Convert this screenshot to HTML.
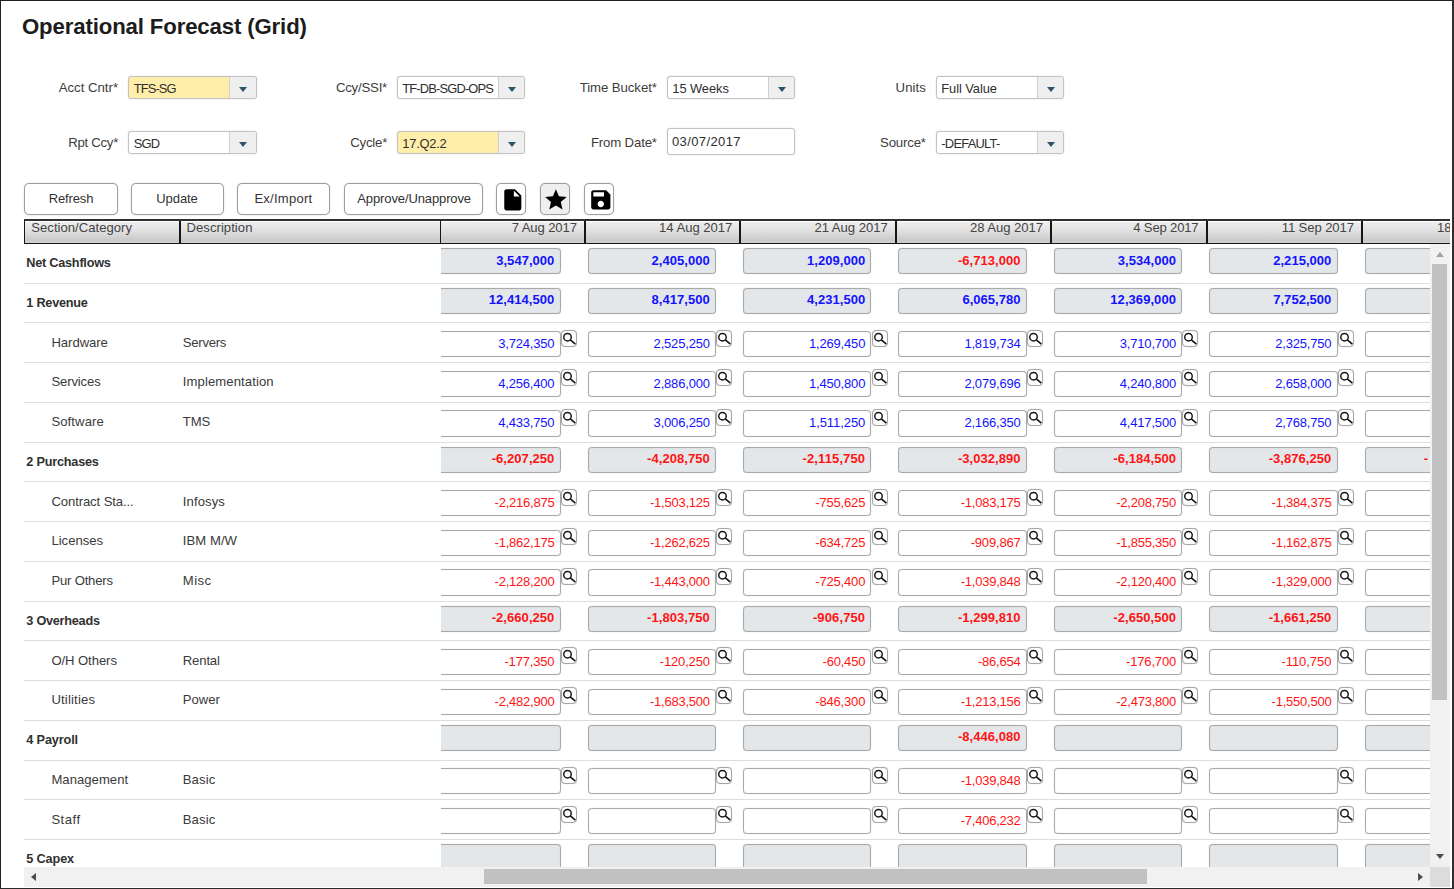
<!DOCTYPE html>
<html><head><meta charset="utf-8"><title>Operational Forecast (Grid)</title>
<style>
*{box-sizing:border-box;margin:0;padding:0}
html,body{width:1454px;height:889px;overflow:hidden;background:#fff}
body{font-family:"Liberation Sans",sans-serif;color:#333;position:relative;font-size:13px}
.a{position:absolute;white-space:nowrap}
#frame{position:absolute;left:0;top:0;width:1454px;height:889px;border-top:1px solid #222;border-left:1px solid #222;border-right:2px solid #2e2e2e;border-bottom:1px solid #2a2a2a;z-index:50;pointer-events:none}
.x{position:absolute;white-space:nowrap;line-height:20px;height:20px}
.lbl{color:#3c3c3c}
.sel{height:22.4px;width:128.2px;border:1px solid #c2c2c2;border-radius:3px;background:#fff;overflow:hidden;box-shadow:0 0 1.5px rgba(0,0,0,.18)}
.sel.y{background:#ffeeaa}
.sel .b{position:absolute;right:0;top:0;bottom:0;width:26.6px;background:#efefef;border-left:1px solid #cfcfcf}
.sel .b i{position:absolute;left:9.2px;top:10.1px;width:0;height:0;border-left:4.9px solid transparent;border-right:4.9px solid transparent;border-top:5.3px solid #2c5469}
.inp{border:1px solid #c2c2c2;border-radius:3px;background:#fff;box-shadow:0 0 1.5px rgba(0,0,0,.18)}
.btn{height:31.5px;border:1px solid #9e9e9e;border-radius:5px;background:#fff;box-shadow:0 0 1.2px rgba(0,0,0,.28)}
.btn.g{background:#efefef}
.btn svg{position:absolute}
#hdr{left:24px;top:219px;width:1425.8px;height:25px;background:linear-gradient(#fff 0,#fff 1px,#eeeeee 1px,#e2e2e2 9px,#c8c8c8 20.4px,#d0d0d0 20.6px,#d0d0d0 21.5px,#666 21.6px,#666 22px);border:1px solid #161616;border-top:2px solid #303030;border-right:0;overflow:hidden}
.hs{top:0;height:24px;width:2px;background:#161616}
#grid{left:24px;top:243.6px;width:1406px;height:623.6px;overflow:hidden}
.rl{left:0;width:1406px;height:1px;background:#dedede}
#sc{left:417px;top:0;width:989px;height:623.6px;overflow:hidden}
.ci{width:128.4px;height:26.2px;border:1px solid #a9a9a9;border-radius:3.5px;background:#fff;box-shadow:0 0 1px rgba(0,0,0,.2), inset 0 0 1px rgba(0,0,0,.18)}
.ci.t{background:#e4e7ea}
.p{color:#1212ff}.n{color:#ff1414}
.mg{width:16px;height:17px;border:1px solid #a6a6a6;border-radius:4px;background:#fff;overflow:hidden;box-shadow:0 0 1px rgba(0,0,0,.2), inset 0 0 1px rgba(0,0,0,.15)}
.mg svg{position:absolute;left:0;top:0;width:14px;height:14px}
#vsb{left:1430.2px;top:244.3px;width:19.4px;height:623px;background:#f1f1f1}
#hsb{left:24px;top:867px;width:1406.2px;height:20px;background:#f1f1f1}
#corner{left:1430.2px;top:867px;width:19.4px;height:20px;background:#dcdcdc}
.th{background:#c1c1c1}
</style></head>
<body>
<div id="frame"></div>
<div class="x " style="top:17.01px;font-size:22.2px;letter-spacing:-0.136px;font-weight:bold;color:#1c1c1c;left:22.00px;">Operational Forecast (Grid)</div>
<div class="x lbl" style="top:77.83px;font-size:13.2px;letter-spacing:-0.001px;left:58.70px;">Acct Cntr*</div>
<div class="a sel y" style="left:128.4px;top:76.3px">
<div class="x " style="top:2.03px;font-size:12.9px;letter-spacing:-0.867px;color:#2e2e2e;left:4.30px;">TFS-SG</div>
<span class="b"><i></i></span></div>
<div class="x lbl" style="top:132.83px;font-size:13.2px;letter-spacing:-0.272px;left:68.20px;">Rpt Ccy*</div>
<div class="a sel" style="left:128.4px;top:131.3px">
<div class="x " style="top:2.03px;font-size:12.9px;letter-spacing:-0.752px;color:#2e2e2e;left:4.30px;">SGD</div>
<span class="b"><i></i></span></div>
<div class="x lbl" style="top:77.83px;font-size:13.2px;letter-spacing:-0.202px;left:335.90px;">Ccy/SSI*</div>
<div class="a sel" style="left:397.0px;top:76.3px">
<div class="x " style="top:2.03px;font-size:12.9px;letter-spacing:-0.844px;color:#2e2e2e;left:4.30px;">TF-DB-SGD-OPS</div>
<span class="b"><i></i></span></div>
<div class="x lbl" style="top:132.83px;font-size:13.2px;letter-spacing:-0.224px;left:350.30px;">Cycle*</div>
<div class="a sel y" style="left:397.0px;top:131.3px">
<div class="x " style="top:2.03px;font-size:12.9px;letter-spacing:-0.229px;color:#2e2e2e;left:4.30px;">17.Q2.2</div>
<span class="b"><i></i></span></div>
<div class="x lbl" style="top:77.83px;font-size:13.2px;letter-spacing:-0.067px;left:579.70px;">Time Bucket*</div>
<div class="a sel" style="left:667.0px;top:76.3px">
<div class="x " style="top:2.03px;font-size:12.9px;letter-spacing:-0.078px;color:#2e2e2e;left:4.30px;">15 Weeks</div>
<span class="b"><i></i></span></div>
<div class="x lbl" style="top:132.83px;font-size:13.2px;letter-spacing:-0.148px;left:590.90px;">From Date*</div>
<div class="a inp" style="left:667px;top:128.4px;width:128px;height:26.4px">
<div class="x " style="top:2.50px;font-size:13.0px;letter-spacing:0.404px;color:#2e2e2e;left:3.90px;">03/07/2017</div>
</div>
<div class="x lbl" style="top:77.83px;font-size:13.2px;letter-spacing:0.045px;left:895.60px;">Units</div>
<div class="a sel" style="left:936.0px;top:76.3px">
<div class="x " style="top:2.03px;font-size:12.9px;letter-spacing:-0.071px;color:#2e2e2e;left:4.30px;">Full Value</div>
<span class="b"><i></i></span></div>
<div class="x lbl" style="top:132.83px;font-size:13.2px;letter-spacing:-0.152px;left:880.00px;">Source*</div>
<div class="a sel" style="left:936.0px;top:131.3px">
<div class="x " style="top:2.03px;font-size:12.9px;letter-spacing:-0.754px;color:#2e2e2e;left:4.30px;">-DEFAULT-</div>
<span class="b"><i></i></span></div>
<div class="a btn" style="left:24.1px;top:183px;width:93.6px">
<div class="x " style="top:5.10px;font-size:13.0px;letter-spacing:-0.146px;left:23.70px;">Refresh</div>
</div>
<div class="a btn" style="left:130.7px;top:183px;width:93.2px">
<div class="x " style="top:5.10px;font-size:13.0px;letter-spacing:-0.053px;left:24.50px;">Update</div>
</div>
<div class="a btn" style="left:237px;top:183px;width:93.2px">
<div class="x " style="top:5.10px;font-size:13.0px;letter-spacing:0.264px;left:16.40px;">Ex/Import</div>
</div>
<div class="a btn" style="left:343.6px;top:183px;width:139.2px">
<div class="x " style="top:5.10px;font-size:13.0px;letter-spacing:-0.114px;left:12.70px;">Approve/Unapprove</div>
</div>
<div class="a btn" style="left:496.3px;top:183px;width:30.2px">
<svg style="left:2.6px;top:2.8px;width:25.6px;height:25.6px" viewBox="0 0 24 24"><path fill="#000" d="M6 2c-1.1 0-1.99.9-1.99 2L4 20c0 1.1.89 2 1.99 2H18c1.1 0 2-.9 2-2V8l-6-6H6zm7 7V3.5L18.5 9H13z"/></svg>
</div>
<div class="a btn g" style="left:539.6px;top:183px;width:30.8px">
<svg style="left:2.5px;top:2.8px;width:25.8px;height:25.8px" viewBox="0 0 24 24"><path fill="#000" d="M12 17.27L18.18 21l-1.64-7.03L22 9.24l-7.19-.61L12 2 9.19 8.63 2 9.24l5.46 4.73L5.82 21z"/></svg>
</div>
<div class="a btn" style="left:583.9px;top:183px;width:30.0px">
<svg style="left:2.8px;top:2.9px;width:25.6px;height:25.6px" viewBox="0 0 24 24"><path fill="#000" d="M17 3H5c-1.11 0-2 .9-2 2v14c0 1.1.89 2 2 2h14c1.1 0 2-.9 2-2V7l-4-4zm-5 16c-1.66 0-3-1.34-3-3s1.34-3 3-3 3 1.34 3 3-1.34 3-3 3zm3-10H5V5h10v4z"/></svg>
</div>
<div id="hdr" class="a">
<div class="x " style="top:-2.84px;font-size:13.1px;letter-spacing:0.013px;color:#444;left:6.30px;">Section/Category</div>
<div class="a hs" style="left:153.8px"></div>
<div class="x " style="top:-2.84px;font-size:13.1px;letter-spacing:0.043px;color:#444;left:161.50px;">Description</div>
<div class="a hs" style="left:415px;width:1.4px"></div>
<div class="x " style="top:-2.84px;font-size:13.1px;letter-spacing:-0.110px;color:#444;left:486.70px;">7 Aug 2017</div>
<div class="a hs" style="left:559.0px"></div>
<div class="x " style="top:-2.84px;font-size:13.1px;letter-spacing:-0.035px;color:#444;left:634.10px;">14 Aug 2017</div>
<div class="a hs" style="left:714.4px"></div>
<div class="x " style="top:-2.84px;font-size:13.1px;letter-spacing:-0.035px;color:#444;left:789.50px;">21 Aug 2017</div>
<div class="a hs" style="left:869.8px"></div>
<div class="x " style="top:-2.84px;font-size:13.1px;letter-spacing:-0.035px;color:#444;left:944.90px;">28 Aug 2017</div>
<div class="a hs" style="left:1025.2px"></div>
<div class="x " style="top:-2.84px;font-size:13.1px;letter-spacing:-0.182px;color:#444;left:1108.30px;">4 Sep 2017</div>
<div class="a hs" style="left:1180.6px"></div>
<div class="x " style="top:-2.84px;font-size:13.1px;letter-spacing:-0.103px;color:#444;left:1256.70px;">11 Sep 2017</div>
<div class="a hs" style="left:1336.0px"></div>
<div class="x " style="top:-2.84px;font-size:13.1px;letter-spacing:-0.191px;color:#444;left:1412.10px;">18 Sep 2017</div>
<div class="a hs" style="left:1491.4px"></div>
</div>
<div id="grid" class="a">
<div class="x " style="top:9.60px;font-size:12.7px;letter-spacing:-0.239px;font-weight:bold;color:#303030;left:2.30px;">Net Cashflows</div>
<div class="a rl" style="top:39.1px"></div>
<div class="x " style="top:49.34px;font-size:12.7px;letter-spacing:-0.237px;font-weight:bold;color:#303030;left:2.30px;">1 Revenue</div>
<div class="a rl" style="top:78.9px"></div>
<div class="x " style="top:89.05px;font-size:13.1px;letter-spacing:-0.036px;color:#3a3a3a;left:27.40px;">Hardware</div>
<div class="x " style="top:89.05px;font-size:13.1px;letter-spacing:-0.248px;color:#3a3a3a;left:158.80px;">Servers</div>
<div class="a rl" style="top:118.6px"></div>
<div class="x " style="top:128.80px;font-size:13.1px;letter-spacing:-0.129px;color:#3a3a3a;left:27.40px;">Services</div>
<div class="x " style="top:128.80px;font-size:13.1px;letter-spacing:0.102px;color:#3a3a3a;left:158.80px;">Implementation</div>
<div class="a rl" style="top:158.4px"></div>
<div class="x " style="top:168.54px;font-size:13.1px;letter-spacing:0.100px;color:#3a3a3a;left:27.40px;">Software</div>
<div class="x " style="top:168.54px;font-size:13.1px;letter-spacing:-0.151px;color:#3a3a3a;left:158.80px;">TMS</div>
<div class="a rl" style="top:198.1px"></div>
<div class="x " style="top:208.32px;font-size:12.7px;letter-spacing:-0.213px;font-weight:bold;color:#303030;left:2.30px;">2 Purchases</div>
<div class="a rl" style="top:237.9px"></div>
<div class="x " style="top:248.03px;font-size:13.1px;letter-spacing:-0.095px;color:#3a3a3a;left:27.40px;">Contract Sta...</div>
<div class="x " style="top:248.03px;font-size:13.1px;letter-spacing:0.100px;color:#3a3a3a;left:158.80px;">Infosys</div>
<div class="a rl" style="top:277.6px"></div>
<div class="x " style="top:287.78px;font-size:13.1px;letter-spacing:0.012px;color:#3a3a3a;left:27.40px;">Licenses</div>
<div class="x " style="top:287.78px;font-size:13.1px;letter-spacing:0.051px;color:#3a3a3a;left:158.80px;">IBM M/W</div>
<div class="a rl" style="top:317.4px"></div>
<div class="x " style="top:327.52px;font-size:13.1px;letter-spacing:-0.184px;color:#3a3a3a;left:27.40px;">Pur Others</div>
<div class="x " style="top:327.52px;font-size:13.1px;letter-spacing:0.444px;color:#3a3a3a;left:158.80px;">Misc</div>
<div class="a rl" style="top:357.1px"></div>
<div class="x " style="top:367.30px;font-size:12.7px;letter-spacing:-0.250px;font-weight:bold;color:#303030;left:2.30px;">3 Overheads</div>
<div class="a rl" style="top:396.8px"></div>
<div class="x " style="top:407.01px;font-size:13.1px;letter-spacing:-0.074px;color:#3a3a3a;left:27.40px;">O/H Others</div>
<div class="x " style="top:407.01px;font-size:13.1px;letter-spacing:-0.145px;color:#3a3a3a;left:158.80px;">Rental</div>
<div class="a rl" style="top:436.6px"></div>
<div class="x " style="top:446.76px;font-size:13.1px;letter-spacing:0.176px;color:#3a3a3a;left:27.40px;">Utilities</div>
<div class="x " style="top:446.76px;font-size:13.1px;letter-spacing:-0.027px;color:#3a3a3a;left:158.80px;">Power</div>
<div class="a rl" style="top:476.3px"></div>
<div class="x " style="top:486.54px;font-size:12.7px;letter-spacing:-0.138px;font-weight:bold;color:#303030;left:2.30px;">4 Payroll</div>
<div class="a rl" style="top:516.1px"></div>
<div class="x " style="top:526.25px;font-size:13.1px;letter-spacing:0.033px;color:#3a3a3a;left:27.40px;">Management</div>
<div class="x " style="top:526.25px;font-size:13.1px;letter-spacing:0.093px;color:#3a3a3a;left:158.80px;">Basic</div>
<div class="a rl" style="top:555.8px"></div>
<div class="x " style="top:565.99px;font-size:13.1px;letter-spacing:0.499px;color:#3a3a3a;left:27.40px;">Staff</div>
<div class="x " style="top:565.99px;font-size:13.1px;letter-spacing:0.093px;color:#3a3a3a;left:158.80px;">Basic</div>
<div class="a rl" style="top:595.6px"></div>
<div class="x " style="top:605.77px;font-size:12.7px;letter-spacing:-0.144px;font-weight:bold;color:#303030;left:2.30px;">5 Capex</div>
<div class="a rl" style="top:635.3px"></div>
<div id="sc" class="a">
<div class="a ci t p" style="left:-8.8px;top:4.3px">
<div class="x " style="top:1.70px;font-size:13.0px;letter-spacing:0.039px;font-weight:bold;left:63.01px;">3,547,000</div>
</div>
<div class="a ci t p" style="left:146.6px;top:4.3px">
<div class="x " style="top:1.70px;font-size:13.0px;letter-spacing:0.039px;font-weight:bold;left:63.01px;">2,405,000</div>
</div>
<div class="a ci t p" style="left:302.0px;top:4.3px">
<div class="x " style="top:1.70px;font-size:13.0px;letter-spacing:0.039px;font-weight:bold;left:63.01px;">1,209,000</div>
</div>
<div class="a ci t n" style="left:457.4px;top:4.3px">
<div class="x " style="top:1.70px;font-size:13.0px;letter-spacing:0.053px;font-weight:bold;left:58.51px;">-6,713,000</div>
</div>
<div class="a ci t p" style="left:612.8px;top:4.3px">
<div class="x " style="top:1.70px;font-size:13.0px;letter-spacing:0.039px;font-weight:bold;left:63.01px;">3,534,000</div>
</div>
<div class="a ci t p" style="left:768.2px;top:4.3px">
<div class="x " style="top:1.70px;font-size:13.0px;letter-spacing:0.039px;font-weight:bold;left:63.01px;">2,215,000</div>
</div>
<div class="a ci t p" style="left:923.6px;top:4.3px">
</div>
<div class="a ci t p" style="left:-8.8px;top:44.0px">
<div class="x " style="top:1.70px;font-size:13.0px;letter-spacing:0.059px;font-weight:bold;left:55.54px;">12,414,500</div>
</div>
<div class="a ci t p" style="left:146.6px;top:44.0px">
<div class="x " style="top:1.70px;font-size:13.0px;letter-spacing:0.039px;font-weight:bold;left:63.01px;">8,417,500</div>
</div>
<div class="a ci t p" style="left:302.0px;top:44.0px">
<div class="x " style="top:1.70px;font-size:13.0px;letter-spacing:0.039px;font-weight:bold;left:63.01px;">4,231,500</div>
</div>
<div class="a ci t p" style="left:457.4px;top:44.0px">
<div class="x " style="top:1.70px;font-size:13.0px;letter-spacing:0.039px;font-weight:bold;left:63.01px;">6,065,780</div>
</div>
<div class="a ci t p" style="left:612.8px;top:44.0px">
<div class="x " style="top:1.70px;font-size:13.0px;letter-spacing:0.059px;font-weight:bold;left:55.54px;">12,369,000</div>
</div>
<div class="a ci t p" style="left:768.2px;top:44.0px">
<div class="x " style="top:1.70px;font-size:13.0px;letter-spacing:0.039px;font-weight:bold;left:63.01px;">7,752,500</div>
</div>
<div class="a ci t p" style="left:923.6px;top:44.0px">
</div>
<div class="a ci e p" style="left:-8.8px;top:87.3px">
<div class="x " style="top:2.00px;font-size:13.0px;letter-spacing:-0.182px;left:65.00px;">3,724,350</div>
</div>
<div class="a mg" style="left:119.8px;top:86.0px"><svg viewBox="0 0 14 14"><circle cx="5.5" cy="6.2" r="3.75" fill="none" stroke="#151515" stroke-width="1.45"/><path d="M8.3 8.9L13.4 13.2" stroke="#151515" stroke-width="1.6" stroke-linecap="butt"/></svg></div>
<div class="a ci e p" style="left:146.6px;top:87.3px">
<div class="x " style="top:2.00px;font-size:13.0px;letter-spacing:-0.182px;left:65.00px;">2,525,250</div>
</div>
<div class="a mg" style="left:275.2px;top:86.0px"><svg viewBox="0 0 14 14"><circle cx="5.5" cy="6.2" r="3.75" fill="none" stroke="#151515" stroke-width="1.45"/><path d="M8.3 8.9L13.4 13.2" stroke="#151515" stroke-width="1.6" stroke-linecap="butt"/></svg></div>
<div class="a ci e p" style="left:302.0px;top:87.3px">
<div class="x " style="top:2.00px;font-size:13.0px;letter-spacing:-0.182px;left:65.00px;">1,269,450</div>
</div>
<div class="a mg" style="left:430.6px;top:86.0px"><svg viewBox="0 0 14 14"><circle cx="5.5" cy="6.2" r="3.75" fill="none" stroke="#151515" stroke-width="1.45"/><path d="M8.3 8.9L13.4 13.2" stroke="#151515" stroke-width="1.6" stroke-linecap="butt"/></svg></div>
<div class="a ci e p" style="left:457.4px;top:87.3px">
<div class="x " style="top:2.00px;font-size:13.0px;letter-spacing:-0.182px;left:65.00px;">1,819,734</div>
</div>
<div class="a mg" style="left:586.0px;top:86.0px"><svg viewBox="0 0 14 14"><circle cx="5.5" cy="6.2" r="3.75" fill="none" stroke="#151515" stroke-width="1.45"/><path d="M8.3 8.9L13.4 13.2" stroke="#151515" stroke-width="1.6" stroke-linecap="butt"/></svg></div>
<div class="a ci e p" style="left:612.8px;top:87.3px">
<div class="x " style="top:2.00px;font-size:13.0px;letter-spacing:-0.182px;left:65.00px;">3,710,700</div>
</div>
<div class="a mg" style="left:741.4px;top:86.0px"><svg viewBox="0 0 14 14"><circle cx="5.5" cy="6.2" r="3.75" fill="none" stroke="#151515" stroke-width="1.45"/><path d="M8.3 8.9L13.4 13.2" stroke="#151515" stroke-width="1.6" stroke-linecap="butt"/></svg></div>
<div class="a ci e p" style="left:768.2px;top:87.3px">
<div class="x " style="top:2.00px;font-size:13.0px;letter-spacing:-0.182px;left:65.00px;">2,325,750</div>
</div>
<div class="a mg" style="left:896.8px;top:86.0px"><svg viewBox="0 0 14 14"><circle cx="5.5" cy="6.2" r="3.75" fill="none" stroke="#151515" stroke-width="1.45"/><path d="M8.3 8.9L13.4 13.2" stroke="#151515" stroke-width="1.6" stroke-linecap="butt"/></svg></div>
<div class="a ci e p" style="left:923.6px;top:87.3px">
</div>
<div class="a mg" style="left:1052.2px;top:86.0px"><svg viewBox="0 0 14 14"><circle cx="5.5" cy="6.2" r="3.75" fill="none" stroke="#151515" stroke-width="1.45"/><path d="M8.3 8.9L13.4 13.2" stroke="#151515" stroke-width="1.6" stroke-linecap="butt"/></svg></div>
<div class="a ci e p" style="left:-8.8px;top:127.0px">
<div class="x " style="top:2.00px;font-size:13.0px;letter-spacing:-0.182px;left:65.00px;">4,256,400</div>
</div>
<div class="a mg" style="left:119.8px;top:125.7px"><svg viewBox="0 0 14 14"><circle cx="5.5" cy="6.2" r="3.75" fill="none" stroke="#151515" stroke-width="1.45"/><path d="M8.3 8.9L13.4 13.2" stroke="#151515" stroke-width="1.6" stroke-linecap="butt"/></svg></div>
<div class="a ci e p" style="left:146.6px;top:127.0px">
<div class="x " style="top:2.00px;font-size:13.0px;letter-spacing:-0.182px;left:65.00px;">2,886,000</div>
</div>
<div class="a mg" style="left:275.2px;top:125.7px"><svg viewBox="0 0 14 14"><circle cx="5.5" cy="6.2" r="3.75" fill="none" stroke="#151515" stroke-width="1.45"/><path d="M8.3 8.9L13.4 13.2" stroke="#151515" stroke-width="1.6" stroke-linecap="butt"/></svg></div>
<div class="a ci e p" style="left:302.0px;top:127.0px">
<div class="x " style="top:2.00px;font-size:13.0px;letter-spacing:-0.182px;left:65.00px;">1,450,800</div>
</div>
<div class="a mg" style="left:430.6px;top:125.7px"><svg viewBox="0 0 14 14"><circle cx="5.5" cy="6.2" r="3.75" fill="none" stroke="#151515" stroke-width="1.45"/><path d="M8.3 8.9L13.4 13.2" stroke="#151515" stroke-width="1.6" stroke-linecap="butt"/></svg></div>
<div class="a ci e p" style="left:457.4px;top:127.0px">
<div class="x " style="top:2.00px;font-size:13.0px;letter-spacing:-0.182px;left:65.00px;">2,079,696</div>
</div>
<div class="a mg" style="left:586.0px;top:125.7px"><svg viewBox="0 0 14 14"><circle cx="5.5" cy="6.2" r="3.75" fill="none" stroke="#151515" stroke-width="1.45"/><path d="M8.3 8.9L13.4 13.2" stroke="#151515" stroke-width="1.6" stroke-linecap="butt"/></svg></div>
<div class="a ci e p" style="left:612.8px;top:127.0px">
<div class="x " style="top:2.00px;font-size:13.0px;letter-spacing:-0.182px;left:65.00px;">4,240,800</div>
</div>
<div class="a mg" style="left:741.4px;top:125.7px"><svg viewBox="0 0 14 14"><circle cx="5.5" cy="6.2" r="3.75" fill="none" stroke="#151515" stroke-width="1.45"/><path d="M8.3 8.9L13.4 13.2" stroke="#151515" stroke-width="1.6" stroke-linecap="butt"/></svg></div>
<div class="a ci e p" style="left:768.2px;top:127.0px">
<div class="x " style="top:2.00px;font-size:13.0px;letter-spacing:-0.182px;left:65.00px;">2,658,000</div>
</div>
<div class="a mg" style="left:896.8px;top:125.7px"><svg viewBox="0 0 14 14"><circle cx="5.5" cy="6.2" r="3.75" fill="none" stroke="#151515" stroke-width="1.45"/><path d="M8.3 8.9L13.4 13.2" stroke="#151515" stroke-width="1.6" stroke-linecap="butt"/></svg></div>
<div class="a ci e p" style="left:923.6px;top:127.0px">
</div>
<div class="a mg" style="left:1052.2px;top:125.7px"><svg viewBox="0 0 14 14"><circle cx="5.5" cy="6.2" r="3.75" fill="none" stroke="#151515" stroke-width="1.45"/><path d="M8.3 8.9L13.4 13.2" stroke="#151515" stroke-width="1.6" stroke-linecap="butt"/></svg></div>
<div class="a ci e p" style="left:-8.8px;top:166.8px">
<div class="x " style="top:2.00px;font-size:13.0px;letter-spacing:-0.182px;left:65.00px;">4,433,750</div>
</div>
<div class="a mg" style="left:119.8px;top:165.5px"><svg viewBox="0 0 14 14"><circle cx="5.5" cy="6.2" r="3.75" fill="none" stroke="#151515" stroke-width="1.45"/><path d="M8.3 8.9L13.4 13.2" stroke="#151515" stroke-width="1.6" stroke-linecap="butt"/></svg></div>
<div class="a ci e p" style="left:146.6px;top:166.8px">
<div class="x " style="top:2.00px;font-size:13.0px;letter-spacing:-0.182px;left:65.00px;">3,006,250</div>
</div>
<div class="a mg" style="left:275.2px;top:165.5px"><svg viewBox="0 0 14 14"><circle cx="5.5" cy="6.2" r="3.75" fill="none" stroke="#151515" stroke-width="1.45"/><path d="M8.3 8.9L13.4 13.2" stroke="#151515" stroke-width="1.6" stroke-linecap="butt"/></svg></div>
<div class="a ci e p" style="left:302.0px;top:166.8px">
<div class="x " style="top:2.00px;font-size:13.0px;letter-spacing:-0.074px;left:65.00px;">1,511,250</div>
</div>
<div class="a mg" style="left:430.6px;top:165.5px"><svg viewBox="0 0 14 14"><circle cx="5.5" cy="6.2" r="3.75" fill="none" stroke="#151515" stroke-width="1.45"/><path d="M8.3 8.9L13.4 13.2" stroke="#151515" stroke-width="1.6" stroke-linecap="butt"/></svg></div>
<div class="a ci e p" style="left:457.4px;top:166.8px">
<div class="x " style="top:2.00px;font-size:13.0px;letter-spacing:-0.182px;left:65.00px;">2,166,350</div>
</div>
<div class="a mg" style="left:586.0px;top:165.5px"><svg viewBox="0 0 14 14"><circle cx="5.5" cy="6.2" r="3.75" fill="none" stroke="#151515" stroke-width="1.45"/><path d="M8.3 8.9L13.4 13.2" stroke="#151515" stroke-width="1.6" stroke-linecap="butt"/></svg></div>
<div class="a ci e p" style="left:612.8px;top:166.8px">
<div class="x " style="top:2.00px;font-size:13.0px;letter-spacing:-0.182px;left:65.00px;">4,417,500</div>
</div>
<div class="a mg" style="left:741.4px;top:165.5px"><svg viewBox="0 0 14 14"><circle cx="5.5" cy="6.2" r="3.75" fill="none" stroke="#151515" stroke-width="1.45"/><path d="M8.3 8.9L13.4 13.2" stroke="#151515" stroke-width="1.6" stroke-linecap="butt"/></svg></div>
<div class="a ci e p" style="left:768.2px;top:166.8px">
<div class="x " style="top:2.00px;font-size:13.0px;letter-spacing:-0.182px;left:65.00px;">2,768,750</div>
</div>
<div class="a mg" style="left:896.8px;top:165.5px"><svg viewBox="0 0 14 14"><circle cx="5.5" cy="6.2" r="3.75" fill="none" stroke="#151515" stroke-width="1.45"/><path d="M8.3 8.9L13.4 13.2" stroke="#151515" stroke-width="1.6" stroke-linecap="butt"/></svg></div>
<div class="a ci e p" style="left:923.6px;top:166.8px">
</div>
<div class="a mg" style="left:1052.2px;top:165.5px"><svg viewBox="0 0 14 14"><circle cx="5.5" cy="6.2" r="3.75" fill="none" stroke="#151515" stroke-width="1.45"/><path d="M8.3 8.9L13.4 13.2" stroke="#151515" stroke-width="1.6" stroke-linecap="butt"/></svg></div>
<div class="a ci t n" style="left:-8.8px;top:203.0px">
<div class="x " style="top:1.70px;font-size:13.0px;letter-spacing:0.053px;font-weight:bold;left:58.51px;">-6,207,250</div>
</div>
<div class="a ci t n" style="left:146.6px;top:203.0px">
<div class="x " style="top:1.70px;font-size:13.0px;letter-spacing:0.053px;font-weight:bold;left:58.51px;">-4,208,750</div>
</div>
<div class="a ci t n" style="left:302.0px;top:203.0px">
<div class="x " style="top:1.70px;font-size:13.0px;letter-spacing:0.124px;font-weight:bold;left:58.51px;">-2,115,750</div>
</div>
<div class="a ci t n" style="left:457.4px;top:203.0px">
<div class="x " style="top:1.70px;font-size:13.0px;letter-spacing:0.053px;font-weight:bold;left:58.51px;">-3,032,890</div>
</div>
<div class="a ci t n" style="left:612.8px;top:203.0px">
<div class="x " style="top:1.70px;font-size:13.0px;letter-spacing:0.053px;font-weight:bold;left:58.51px;">-6,184,500</div>
</div>
<div class="a ci t n" style="left:768.2px;top:203.0px">
<div class="x " style="top:1.70px;font-size:13.0px;letter-spacing:0.053px;font-weight:bold;left:58.51px;">-3,876,250</div>
</div>
<div class="a ci t n" style="left:923.6px;top:203.0px">
<div class="x " style="top:1.70px;font-size:13.0px;letter-spacing:1.070px;font-weight:bold;left:58.10px;">-</div>
</div>
<div class="a ci e n" style="left:-8.8px;top:246.3px">
<div class="x " style="top:2.00px;font-size:13.0px;letter-spacing:-0.236px;left:61.40px;">-2,216,875</div>
</div>
<div class="a mg" style="left:119.8px;top:245.0px"><svg viewBox="0 0 14 14"><circle cx="5.5" cy="6.2" r="3.75" fill="none" stroke="#151515" stroke-width="1.45"/><path d="M8.3 8.9L13.4 13.2" stroke="#151515" stroke-width="1.6" stroke-linecap="butt"/></svg></div>
<div class="a ci e n" style="left:146.6px;top:246.3px">
<div class="x " style="top:2.00px;font-size:13.0px;letter-spacing:-0.236px;left:61.40px;">-1,503,125</div>
</div>
<div class="a mg" style="left:275.2px;top:245.0px"><svg viewBox="0 0 14 14"><circle cx="5.5" cy="6.2" r="3.75" fill="none" stroke="#151515" stroke-width="1.45"/><path d="M8.3 8.9L13.4 13.2" stroke="#151515" stroke-width="1.6" stroke-linecap="butt"/></svg></div>
<div class="a ci e n" style="left:302.0px;top:246.3px">
<div class="x " style="top:2.00px;font-size:13.0px;letter-spacing:-0.172px;left:71.25px;">-755,625</div>
</div>
<div class="a mg" style="left:430.6px;top:245.0px"><svg viewBox="0 0 14 14"><circle cx="5.5" cy="6.2" r="3.75" fill="none" stroke="#151515" stroke-width="1.45"/><path d="M8.3 8.9L13.4 13.2" stroke="#151515" stroke-width="1.6" stroke-linecap="butt"/></svg></div>
<div class="a ci e n" style="left:457.4px;top:246.3px">
<div class="x " style="top:2.00px;font-size:13.0px;letter-spacing:-0.236px;left:61.40px;">-1,083,175</div>
</div>
<div class="a mg" style="left:586.0px;top:245.0px"><svg viewBox="0 0 14 14"><circle cx="5.5" cy="6.2" r="3.75" fill="none" stroke="#151515" stroke-width="1.45"/><path d="M8.3 8.9L13.4 13.2" stroke="#151515" stroke-width="1.6" stroke-linecap="butt"/></svg></div>
<div class="a ci e n" style="left:612.8px;top:246.3px">
<div class="x " style="top:2.00px;font-size:13.0px;letter-spacing:-0.236px;left:61.40px;">-2,208,750</div>
</div>
<div class="a mg" style="left:741.4px;top:245.0px"><svg viewBox="0 0 14 14"><circle cx="5.5" cy="6.2" r="3.75" fill="none" stroke="#151515" stroke-width="1.45"/><path d="M8.3 8.9L13.4 13.2" stroke="#151515" stroke-width="1.6" stroke-linecap="butt"/></svg></div>
<div class="a ci e n" style="left:768.2px;top:246.3px">
<div class="x " style="top:2.00px;font-size:13.0px;letter-spacing:-0.236px;left:61.40px;">-1,384,375</div>
</div>
<div class="a mg" style="left:896.8px;top:245.0px"><svg viewBox="0 0 14 14"><circle cx="5.5" cy="6.2" r="3.75" fill="none" stroke="#151515" stroke-width="1.45"/><path d="M8.3 8.9L13.4 13.2" stroke="#151515" stroke-width="1.6" stroke-linecap="butt"/></svg></div>
<div class="a ci e p" style="left:923.6px;top:246.3px">
</div>
<div class="a mg" style="left:1052.2px;top:245.0px"><svg viewBox="0 0 14 14"><circle cx="5.5" cy="6.2" r="3.75" fill="none" stroke="#151515" stroke-width="1.45"/><path d="M8.3 8.9L13.4 13.2" stroke="#151515" stroke-width="1.6" stroke-linecap="butt"/></svg></div>
<div class="a ci e n" style="left:-8.8px;top:286.0px">
<div class="x " style="top:2.00px;font-size:13.0px;letter-spacing:-0.236px;left:61.40px;">-1,862,175</div>
</div>
<div class="a mg" style="left:119.8px;top:284.7px"><svg viewBox="0 0 14 14"><circle cx="5.5" cy="6.2" r="3.75" fill="none" stroke="#151515" stroke-width="1.45"/><path d="M8.3 8.9L13.4 13.2" stroke="#151515" stroke-width="1.6" stroke-linecap="butt"/></svg></div>
<div class="a ci e n" style="left:146.6px;top:286.0px">
<div class="x " style="top:2.00px;font-size:13.0px;letter-spacing:-0.236px;left:61.40px;">-1,262,625</div>
</div>
<div class="a mg" style="left:275.2px;top:284.7px"><svg viewBox="0 0 14 14"><circle cx="5.5" cy="6.2" r="3.75" fill="none" stroke="#151515" stroke-width="1.45"/><path d="M8.3 8.9L13.4 13.2" stroke="#151515" stroke-width="1.6" stroke-linecap="butt"/></svg></div>
<div class="a ci e n" style="left:302.0px;top:286.0px">
<div class="x " style="top:2.00px;font-size:13.0px;letter-spacing:-0.172px;left:71.25px;">-634,725</div>
</div>
<div class="a mg" style="left:430.6px;top:284.7px"><svg viewBox="0 0 14 14"><circle cx="5.5" cy="6.2" r="3.75" fill="none" stroke="#151515" stroke-width="1.45"/><path d="M8.3 8.9L13.4 13.2" stroke="#151515" stroke-width="1.6" stroke-linecap="butt"/></svg></div>
<div class="a ci e n" style="left:457.4px;top:286.0px">
<div class="x " style="top:2.00px;font-size:13.0px;letter-spacing:-0.172px;left:71.25px;">-909,867</div>
</div>
<div class="a mg" style="left:586.0px;top:284.7px"><svg viewBox="0 0 14 14"><circle cx="5.5" cy="6.2" r="3.75" fill="none" stroke="#151515" stroke-width="1.45"/><path d="M8.3 8.9L13.4 13.2" stroke="#151515" stroke-width="1.6" stroke-linecap="butt"/></svg></div>
<div class="a ci e n" style="left:612.8px;top:286.0px">
<div class="x " style="top:2.00px;font-size:13.0px;letter-spacing:-0.236px;left:61.40px;">-1,855,350</div>
</div>
<div class="a mg" style="left:741.4px;top:284.7px"><svg viewBox="0 0 14 14"><circle cx="5.5" cy="6.2" r="3.75" fill="none" stroke="#151515" stroke-width="1.45"/><path d="M8.3 8.9L13.4 13.2" stroke="#151515" stroke-width="1.6" stroke-linecap="butt"/></svg></div>
<div class="a ci e n" style="left:768.2px;top:286.0px">
<div class="x " style="top:2.00px;font-size:13.0px;letter-spacing:-0.236px;left:61.40px;">-1,162,875</div>
</div>
<div class="a mg" style="left:896.8px;top:284.7px"><svg viewBox="0 0 14 14"><circle cx="5.5" cy="6.2" r="3.75" fill="none" stroke="#151515" stroke-width="1.45"/><path d="M8.3 8.9L13.4 13.2" stroke="#151515" stroke-width="1.6" stroke-linecap="butt"/></svg></div>
<div class="a ci e p" style="left:923.6px;top:286.0px">
</div>
<div class="a mg" style="left:1052.2px;top:284.7px"><svg viewBox="0 0 14 14"><circle cx="5.5" cy="6.2" r="3.75" fill="none" stroke="#151515" stroke-width="1.45"/><path d="M8.3 8.9L13.4 13.2" stroke="#151515" stroke-width="1.6" stroke-linecap="butt"/></svg></div>
<div class="a ci e n" style="left:-8.8px;top:325.8px">
<div class="x " style="top:2.00px;font-size:13.0px;letter-spacing:-0.236px;left:61.40px;">-2,128,200</div>
</div>
<div class="a mg" style="left:119.8px;top:324.5px"><svg viewBox="0 0 14 14"><circle cx="5.5" cy="6.2" r="3.75" fill="none" stroke="#151515" stroke-width="1.45"/><path d="M8.3 8.9L13.4 13.2" stroke="#151515" stroke-width="1.6" stroke-linecap="butt"/></svg></div>
<div class="a ci e n" style="left:146.6px;top:325.8px">
<div class="x " style="top:2.00px;font-size:13.0px;letter-spacing:-0.236px;left:61.40px;">-1,443,000</div>
</div>
<div class="a mg" style="left:275.2px;top:324.5px"><svg viewBox="0 0 14 14"><circle cx="5.5" cy="6.2" r="3.75" fill="none" stroke="#151515" stroke-width="1.45"/><path d="M8.3 8.9L13.4 13.2" stroke="#151515" stroke-width="1.6" stroke-linecap="butt"/></svg></div>
<div class="a ci e n" style="left:302.0px;top:325.8px">
<div class="x " style="top:2.00px;font-size:13.0px;letter-spacing:-0.172px;left:71.25px;">-725,400</div>
</div>
<div class="a mg" style="left:430.6px;top:324.5px"><svg viewBox="0 0 14 14"><circle cx="5.5" cy="6.2" r="3.75" fill="none" stroke="#151515" stroke-width="1.45"/><path d="M8.3 8.9L13.4 13.2" stroke="#151515" stroke-width="1.6" stroke-linecap="butt"/></svg></div>
<div class="a ci e n" style="left:457.4px;top:325.8px">
<div class="x " style="top:2.00px;font-size:13.0px;letter-spacing:-0.236px;left:61.40px;">-1,039,848</div>
</div>
<div class="a mg" style="left:586.0px;top:324.5px"><svg viewBox="0 0 14 14"><circle cx="5.5" cy="6.2" r="3.75" fill="none" stroke="#151515" stroke-width="1.45"/><path d="M8.3 8.9L13.4 13.2" stroke="#151515" stroke-width="1.6" stroke-linecap="butt"/></svg></div>
<div class="a ci e n" style="left:612.8px;top:325.8px">
<div class="x " style="top:2.00px;font-size:13.0px;letter-spacing:-0.236px;left:61.40px;">-2,120,400</div>
</div>
<div class="a mg" style="left:741.4px;top:324.5px"><svg viewBox="0 0 14 14"><circle cx="5.5" cy="6.2" r="3.75" fill="none" stroke="#151515" stroke-width="1.45"/><path d="M8.3 8.9L13.4 13.2" stroke="#151515" stroke-width="1.6" stroke-linecap="butt"/></svg></div>
<div class="a ci e n" style="left:768.2px;top:325.8px">
<div class="x " style="top:2.00px;font-size:13.0px;letter-spacing:-0.236px;left:61.40px;">-1,329,000</div>
</div>
<div class="a mg" style="left:896.8px;top:324.5px"><svg viewBox="0 0 14 14"><circle cx="5.5" cy="6.2" r="3.75" fill="none" stroke="#151515" stroke-width="1.45"/><path d="M8.3 8.9L13.4 13.2" stroke="#151515" stroke-width="1.6" stroke-linecap="butt"/></svg></div>
<div class="a ci e p" style="left:923.6px;top:325.8px">
</div>
<div class="a mg" style="left:1052.2px;top:324.5px"><svg viewBox="0 0 14 14"><circle cx="5.5" cy="6.2" r="3.75" fill="none" stroke="#151515" stroke-width="1.45"/><path d="M8.3 8.9L13.4 13.2" stroke="#151515" stroke-width="1.6" stroke-linecap="butt"/></svg></div>
<div class="a ci t n" style="left:-8.8px;top:362.0px">
<div class="x " style="top:1.70px;font-size:13.0px;letter-spacing:0.053px;font-weight:bold;left:58.51px;">-2,660,250</div>
</div>
<div class="a ci t n" style="left:146.6px;top:362.0px">
<div class="x " style="top:1.70px;font-size:13.0px;letter-spacing:0.053px;font-weight:bold;left:58.51px;">-1,803,750</div>
</div>
<div class="a ci t n" style="left:302.0px;top:362.0px">
<div class="x " style="top:1.70px;font-size:13.0px;letter-spacing:0.118px;font-weight:bold;left:68.93px;">-906,750</div>
</div>
<div class="a ci t n" style="left:457.4px;top:362.0px">
<div class="x " style="top:1.70px;font-size:13.0px;letter-spacing:0.053px;font-weight:bold;left:58.51px;">-1,299,810</div>
</div>
<div class="a ci t n" style="left:612.8px;top:362.0px">
<div class="x " style="top:1.70px;font-size:13.0px;letter-spacing:0.053px;font-weight:bold;left:58.51px;">-2,650,500</div>
</div>
<div class="a ci t n" style="left:768.2px;top:362.0px">
<div class="x " style="top:1.70px;font-size:13.0px;letter-spacing:0.053px;font-weight:bold;left:58.51px;">-1,661,250</div>
</div>
<div class="a ci t p" style="left:923.6px;top:362.0px">
</div>
<div class="a ci e n" style="left:-8.8px;top:405.2px">
<div class="x " style="top:2.00px;font-size:13.0px;letter-spacing:-0.172px;left:71.25px;">-177,350</div>
</div>
<div class="a mg" style="left:119.8px;top:403.9px"><svg viewBox="0 0 14 14"><circle cx="5.5" cy="6.2" r="3.75" fill="none" stroke="#151515" stroke-width="1.45"/><path d="M8.3 8.9L13.4 13.2" stroke="#151515" stroke-width="1.6" stroke-linecap="butt"/></svg></div>
<div class="a ci e n" style="left:146.6px;top:405.2px">
<div class="x " style="top:2.00px;font-size:13.0px;letter-spacing:-0.172px;left:71.25px;">-120,250</div>
</div>
<div class="a mg" style="left:275.2px;top:403.9px"><svg viewBox="0 0 14 14"><circle cx="5.5" cy="6.2" r="3.75" fill="none" stroke="#151515" stroke-width="1.45"/><path d="M8.3 8.9L13.4 13.2" stroke="#151515" stroke-width="1.6" stroke-linecap="butt"/></svg></div>
<div class="a ci e n" style="left:302.0px;top:405.2px">
<div class="x " style="top:2.00px;font-size:13.0px;letter-spacing:-0.206px;left:78.55px;">-60,450</div>
</div>
<div class="a mg" style="left:430.6px;top:403.9px"><svg viewBox="0 0 14 14"><circle cx="5.5" cy="6.2" r="3.75" fill="none" stroke="#151515" stroke-width="1.45"/><path d="M8.3 8.9L13.4 13.2" stroke="#151515" stroke-width="1.6" stroke-linecap="butt"/></svg></div>
<div class="a ci e n" style="left:457.4px;top:405.2px">
<div class="x " style="top:2.00px;font-size:13.0px;letter-spacing:-0.206px;left:78.55px;">-86,654</div>
</div>
<div class="a mg" style="left:586.0px;top:403.9px"><svg viewBox="0 0 14 14"><circle cx="5.5" cy="6.2" r="3.75" fill="none" stroke="#151515" stroke-width="1.45"/><path d="M8.3 8.9L13.4 13.2" stroke="#151515" stroke-width="1.6" stroke-linecap="butt"/></svg></div>
<div class="a ci e n" style="left:612.8px;top:405.2px">
<div class="x " style="top:2.00px;font-size:13.0px;letter-spacing:-0.172px;left:71.25px;">-176,700</div>
</div>
<div class="a mg" style="left:741.4px;top:403.9px"><svg viewBox="0 0 14 14"><circle cx="5.5" cy="6.2" r="3.75" fill="none" stroke="#151515" stroke-width="1.45"/><path d="M8.3 8.9L13.4 13.2" stroke="#151515" stroke-width="1.6" stroke-linecap="butt"/></svg></div>
<div class="a ci e n" style="left:768.2px;top:405.2px">
<div class="x " style="top:2.00px;font-size:13.0px;letter-spacing:-0.051px;left:71.25px;">-110,750</div>
</div>
<div class="a mg" style="left:896.8px;top:403.9px"><svg viewBox="0 0 14 14"><circle cx="5.5" cy="6.2" r="3.75" fill="none" stroke="#151515" stroke-width="1.45"/><path d="M8.3 8.9L13.4 13.2" stroke="#151515" stroke-width="1.6" stroke-linecap="butt"/></svg></div>
<div class="a ci e p" style="left:923.6px;top:405.2px">
</div>
<div class="a mg" style="left:1052.2px;top:403.9px"><svg viewBox="0 0 14 14"><circle cx="5.5" cy="6.2" r="3.75" fill="none" stroke="#151515" stroke-width="1.45"/><path d="M8.3 8.9L13.4 13.2" stroke="#151515" stroke-width="1.6" stroke-linecap="butt"/></svg></div>
<div class="a ci e n" style="left:-8.8px;top:445.0px">
<div class="x " style="top:2.00px;font-size:13.0px;letter-spacing:-0.236px;left:61.40px;">-2,482,900</div>
</div>
<div class="a mg" style="left:119.8px;top:443.7px"><svg viewBox="0 0 14 14"><circle cx="5.5" cy="6.2" r="3.75" fill="none" stroke="#151515" stroke-width="1.45"/><path d="M8.3 8.9L13.4 13.2" stroke="#151515" stroke-width="1.6" stroke-linecap="butt"/></svg></div>
<div class="a ci e n" style="left:146.6px;top:445.0px">
<div class="x " style="top:2.00px;font-size:13.0px;letter-spacing:-0.236px;left:61.40px;">-1,683,500</div>
</div>
<div class="a mg" style="left:275.2px;top:443.7px"><svg viewBox="0 0 14 14"><circle cx="5.5" cy="6.2" r="3.75" fill="none" stroke="#151515" stroke-width="1.45"/><path d="M8.3 8.9L13.4 13.2" stroke="#151515" stroke-width="1.6" stroke-linecap="butt"/></svg></div>
<div class="a ci e n" style="left:302.0px;top:445.0px">
<div class="x " style="top:2.00px;font-size:13.0px;letter-spacing:-0.172px;left:71.25px;">-846,300</div>
</div>
<div class="a mg" style="left:430.6px;top:443.7px"><svg viewBox="0 0 14 14"><circle cx="5.5" cy="6.2" r="3.75" fill="none" stroke="#151515" stroke-width="1.45"/><path d="M8.3 8.9L13.4 13.2" stroke="#151515" stroke-width="1.6" stroke-linecap="butt"/></svg></div>
<div class="a ci e n" style="left:457.4px;top:445.0px">
<div class="x " style="top:2.00px;font-size:13.0px;letter-spacing:-0.236px;left:61.40px;">-1,213,156</div>
</div>
<div class="a mg" style="left:586.0px;top:443.7px"><svg viewBox="0 0 14 14"><circle cx="5.5" cy="6.2" r="3.75" fill="none" stroke="#151515" stroke-width="1.45"/><path d="M8.3 8.9L13.4 13.2" stroke="#151515" stroke-width="1.6" stroke-linecap="butt"/></svg></div>
<div class="a ci e n" style="left:612.8px;top:445.0px">
<div class="x " style="top:2.00px;font-size:13.0px;letter-spacing:-0.236px;left:61.40px;">-2,473,800</div>
</div>
<div class="a mg" style="left:741.4px;top:443.7px"><svg viewBox="0 0 14 14"><circle cx="5.5" cy="6.2" r="3.75" fill="none" stroke="#151515" stroke-width="1.45"/><path d="M8.3 8.9L13.4 13.2" stroke="#151515" stroke-width="1.6" stroke-linecap="butt"/></svg></div>
<div class="a ci e n" style="left:768.2px;top:445.0px">
<div class="x " style="top:2.00px;font-size:13.0px;letter-spacing:-0.236px;left:61.40px;">-1,550,500</div>
</div>
<div class="a mg" style="left:896.8px;top:443.7px"><svg viewBox="0 0 14 14"><circle cx="5.5" cy="6.2" r="3.75" fill="none" stroke="#151515" stroke-width="1.45"/><path d="M8.3 8.9L13.4 13.2" stroke="#151515" stroke-width="1.6" stroke-linecap="butt"/></svg></div>
<div class="a ci e p" style="left:923.6px;top:445.0px">
</div>
<div class="a mg" style="left:1052.2px;top:443.7px"><svg viewBox="0 0 14 14"><circle cx="5.5" cy="6.2" r="3.75" fill="none" stroke="#151515" stroke-width="1.45"/><path d="M8.3 8.9L13.4 13.2" stroke="#151515" stroke-width="1.6" stroke-linecap="butt"/></svg></div>
<div class="a ci t p" style="left:-8.8px;top:481.2px">
</div>
<div class="a ci t p" style="left:146.6px;top:481.2px">
</div>
<div class="a ci t p" style="left:302.0px;top:481.2px">
</div>
<div class="a ci t n" style="left:457.4px;top:481.2px">
<div class="x " style="top:1.70px;font-size:13.0px;letter-spacing:0.053px;font-weight:bold;left:58.51px;">-8,446,080</div>
</div>
<div class="a ci t p" style="left:612.8px;top:481.2px">
</div>
<div class="a ci t p" style="left:768.2px;top:481.2px">
</div>
<div class="a ci t p" style="left:923.6px;top:481.2px">
</div>
<div class="a ci e p" style="left:-8.8px;top:524.5px">
</div>
<div class="a mg" style="left:119.8px;top:523.2px"><svg viewBox="0 0 14 14"><circle cx="5.5" cy="6.2" r="3.75" fill="none" stroke="#151515" stroke-width="1.45"/><path d="M8.3 8.9L13.4 13.2" stroke="#151515" stroke-width="1.6" stroke-linecap="butt"/></svg></div>
<div class="a ci e p" style="left:146.6px;top:524.5px">
</div>
<div class="a mg" style="left:275.2px;top:523.2px"><svg viewBox="0 0 14 14"><circle cx="5.5" cy="6.2" r="3.75" fill="none" stroke="#151515" stroke-width="1.45"/><path d="M8.3 8.9L13.4 13.2" stroke="#151515" stroke-width="1.6" stroke-linecap="butt"/></svg></div>
<div class="a ci e p" style="left:302.0px;top:524.5px">
</div>
<div class="a mg" style="left:430.6px;top:523.2px"><svg viewBox="0 0 14 14"><circle cx="5.5" cy="6.2" r="3.75" fill="none" stroke="#151515" stroke-width="1.45"/><path d="M8.3 8.9L13.4 13.2" stroke="#151515" stroke-width="1.6" stroke-linecap="butt"/></svg></div>
<div class="a ci e n" style="left:457.4px;top:524.5px">
<div class="x " style="top:2.00px;font-size:13.0px;letter-spacing:-0.236px;left:61.40px;">-1,039,848</div>
</div>
<div class="a mg" style="left:586.0px;top:523.2px"><svg viewBox="0 0 14 14"><circle cx="5.5" cy="6.2" r="3.75" fill="none" stroke="#151515" stroke-width="1.45"/><path d="M8.3 8.9L13.4 13.2" stroke="#151515" stroke-width="1.6" stroke-linecap="butt"/></svg></div>
<div class="a ci e p" style="left:612.8px;top:524.5px">
</div>
<div class="a mg" style="left:741.4px;top:523.2px"><svg viewBox="0 0 14 14"><circle cx="5.5" cy="6.2" r="3.75" fill="none" stroke="#151515" stroke-width="1.45"/><path d="M8.3 8.9L13.4 13.2" stroke="#151515" stroke-width="1.6" stroke-linecap="butt"/></svg></div>
<div class="a ci e p" style="left:768.2px;top:524.5px">
</div>
<div class="a mg" style="left:896.8px;top:523.2px"><svg viewBox="0 0 14 14"><circle cx="5.5" cy="6.2" r="3.75" fill="none" stroke="#151515" stroke-width="1.45"/><path d="M8.3 8.9L13.4 13.2" stroke="#151515" stroke-width="1.6" stroke-linecap="butt"/></svg></div>
<div class="a ci e p" style="left:923.6px;top:524.5px">
</div>
<div class="a mg" style="left:1052.2px;top:523.2px"><svg viewBox="0 0 14 14"><circle cx="5.5" cy="6.2" r="3.75" fill="none" stroke="#151515" stroke-width="1.45"/><path d="M8.3 8.9L13.4 13.2" stroke="#151515" stroke-width="1.6" stroke-linecap="butt"/></svg></div>
<div class="a ci e p" style="left:-8.8px;top:564.2px">
</div>
<div class="a mg" style="left:119.8px;top:562.9px"><svg viewBox="0 0 14 14"><circle cx="5.5" cy="6.2" r="3.75" fill="none" stroke="#151515" stroke-width="1.45"/><path d="M8.3 8.9L13.4 13.2" stroke="#151515" stroke-width="1.6" stroke-linecap="butt"/></svg></div>
<div class="a ci e p" style="left:146.6px;top:564.2px">
</div>
<div class="a mg" style="left:275.2px;top:562.9px"><svg viewBox="0 0 14 14"><circle cx="5.5" cy="6.2" r="3.75" fill="none" stroke="#151515" stroke-width="1.45"/><path d="M8.3 8.9L13.4 13.2" stroke="#151515" stroke-width="1.6" stroke-linecap="butt"/></svg></div>
<div class="a ci e p" style="left:302.0px;top:564.2px">
</div>
<div class="a mg" style="left:430.6px;top:562.9px"><svg viewBox="0 0 14 14"><circle cx="5.5" cy="6.2" r="3.75" fill="none" stroke="#151515" stroke-width="1.45"/><path d="M8.3 8.9L13.4 13.2" stroke="#151515" stroke-width="1.6" stroke-linecap="butt"/></svg></div>
<div class="a ci e n" style="left:457.4px;top:564.2px">
<div class="x " style="top:2.00px;font-size:13.0px;letter-spacing:-0.236px;left:61.40px;">-7,406,232</div>
</div>
<div class="a mg" style="left:586.0px;top:562.9px"><svg viewBox="0 0 14 14"><circle cx="5.5" cy="6.2" r="3.75" fill="none" stroke="#151515" stroke-width="1.45"/><path d="M8.3 8.9L13.4 13.2" stroke="#151515" stroke-width="1.6" stroke-linecap="butt"/></svg></div>
<div class="a ci e p" style="left:612.8px;top:564.2px">
</div>
<div class="a mg" style="left:741.4px;top:562.9px"><svg viewBox="0 0 14 14"><circle cx="5.5" cy="6.2" r="3.75" fill="none" stroke="#151515" stroke-width="1.45"/><path d="M8.3 8.9L13.4 13.2" stroke="#151515" stroke-width="1.6" stroke-linecap="butt"/></svg></div>
<div class="a ci e p" style="left:768.2px;top:564.2px">
</div>
<div class="a mg" style="left:896.8px;top:562.9px"><svg viewBox="0 0 14 14"><circle cx="5.5" cy="6.2" r="3.75" fill="none" stroke="#151515" stroke-width="1.45"/><path d="M8.3 8.9L13.4 13.2" stroke="#151515" stroke-width="1.6" stroke-linecap="butt"/></svg></div>
<div class="a ci e p" style="left:923.6px;top:564.2px">
</div>
<div class="a mg" style="left:1052.2px;top:562.9px"><svg viewBox="0 0 14 14"><circle cx="5.5" cy="6.2" r="3.75" fill="none" stroke="#151515" stroke-width="1.45"/><path d="M8.3 8.9L13.4 13.2" stroke="#151515" stroke-width="1.6" stroke-linecap="butt"/></svg></div>
<div class="a ci t p" style="left:-8.8px;top:600.5px">
</div>
<div class="a ci t p" style="left:146.6px;top:600.5px">
</div>
<div class="a ci t p" style="left:302.0px;top:600.5px">
</div>
<div class="a ci t p" style="left:457.4px;top:600.5px">
</div>
<div class="a ci t p" style="left:612.8px;top:600.5px">
</div>
<div class="a ci t p" style="left:768.2px;top:600.5px">
</div>
<div class="a ci t p" style="left:923.6px;top:600.5px">
</div>
</div>
</div>
<div id="vsb" class="a">
<div class="a" style="left:5.4px;top:7.8px;width:0;height:0;border-left:4.6px solid transparent;border-right:4.6px solid transparent;border-bottom:5.2px solid #a3a3a3"></div>
<div class="a th" style="left:2px;top:19.8px;width:15px;height:435.6px"></div>
<div class="a" style="left:5.4px;top:610px;width:0;height:0;border-left:4.6px solid transparent;border-right:4.6px solid transparent;border-top:5.2px solid #4c4c4c"></div>
</div>
<div id="hsb" class="a">
<div class="a" style="left:6.8px;top:5.6px;width:0;height:0;border-top:4.4px solid transparent;border-bottom:4.4px solid transparent;border-right:5.2px solid #4c4c4c"></div>
<div class="a th" style="left:459.6px;top:2.2px;width:663px;height:15px"></div>
<div class="a" style="left:1394px;top:5.6px;width:0;height:0;border-top:4.4px solid transparent;border-bottom:4.4px solid transparent;border-left:5.2px solid #4c4c4c"></div>
</div>
<div id="corner" class="a"></div>
</body></html>
